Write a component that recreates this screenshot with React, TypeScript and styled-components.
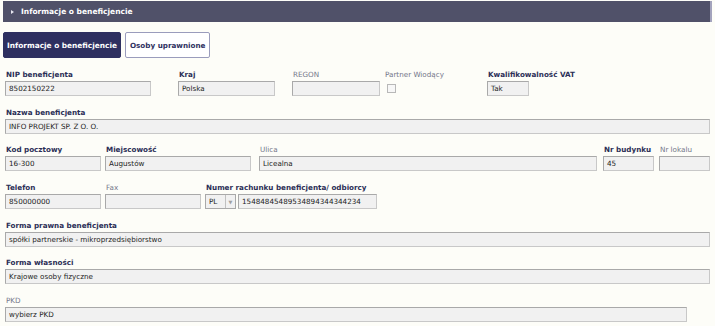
import React from "react";
import styled, { createGlobalStyle } from "styled-components";

const Global = createGlobalStyle`
  html, body { margin: 0; padding: 0; background: #fdfdf8; }
  body { font-family: "DejaVu Sans", Verdana, sans-serif; }
`;

const Page = styled.div`
  width: 715px;
  height: 326px;
  padding: 1px 3px 0 3px;
  box-sizing: border-box;
  overflow: hidden;
`;

const Header = styled.div`
  height: 21px;
  background: #505169;
  border-right: 2px solid #a3a3bd;
  display: flex;
  align-items: center;
  padding-left: 8px;
  gap: 7px;
  color: #fff;
  font-weight: bold;
  font-size: 7.5px;
  width: 709px;
  box-sizing: border-box;
`;

const Caret = styled.span`
  width: 0;
  height: 0;
  border-top: 2.5px solid transparent;
  border-bottom: 2.5px solid transparent;
  border-left: 3px solid #e8e8f0;
`;

const Tabs = styled.div`
  display: flex;
  gap: 4px;
  margin-top: 10px;
`;

const Tab = styled.div<{ $active?: boolean }>`
  height: 26px;
  display: flex;
  align-items: center;
  padding: 0 ${(p) => (p.$active ? "3px" : "4px")};
  border-radius: 2px;
  font-weight: bold;
  font-size: ${(p) => (p.$active ? "7.4px" : "7.2px")};
  box-sizing: border-box;
  background: ${(p) => (p.$active ? "#2e3060" : "#ffffff")};
  color: ${(p) => (p.$active ? "#ffffff" : "#2e3060")};
  border: 1px solid ${(p) => (p.$active ? "#2e3060" : "#9a9cbc")};
`;

const Form = styled.div`
  display: flex;
  flex-direction: column;
  gap: 11.7px;
  margin-top: 12px;
  padding-left: 2px;
`;

const Row = styled.div`
  display: flex;
  align-items: flex-start;
`;

const Field = styled.div<{ $w: number }>`
  width: ${(p) => p.$w}px;
  flex: none;
  display: flex;
  flex-direction: column;
`;

const Label = styled.div<{ $light?: boolean }>`
  height: 11px;
  line-height: 9px;
  font-size: 7.2px;
  padding-left: 1px;
  white-space: nowrap;
  font-weight: ${(p) => (p.$light ? "normal" : "bold")};
  color: ${(p) => (p.$light ? "#737689" : "#2b2e56")};
`;

const Input = styled.div<{ $w: number }>`
  width: ${(p) => p.$w}px;
  height: 15px;
  box-sizing: border-box;
  background: #f1f1f1;
  border: 1px solid #a9a9a9;
  border-right-color: #c8c8c8;
  border-bottom-color: #c8c8c8;
  font-size: 7.2px;
  color: #1c1c1c;
  line-height: 13px;
  padding-left: 3px;
  white-space: nowrap;
  overflow: hidden;
`;

const Check = styled.div`
  width: 9px;
  height: 9px;
  margin: 3px 0 0 3px;
  box-sizing: border-box;
  border: 1px solid #b8b8b8;
  background: #f7f7f7;
`;

const Inline = styled.div`
  display: flex;
  gap: 2px;
`;

const Select = styled.div`
  width: 31px;
  height: 15px;
  box-sizing: border-box;
  border: 1px solid #a9a9a9;
  background: #f1f1f1;
  display: flex;
  font-size: 7.2px;
  color: #1c1c1c;
`;

const SelectText = styled.div`
  width: 16px;
  line-height: 13px;
  padding-left: 3px;
  border-right: 1px solid #c0c0c0;
`;

const SelectArrow = styled.div`
  flex: 1;
  display: flex;
  align-items: center;
  justify-content: center;
  color: #a0a0a0;
  font-size: 5px;
`;

export default function App() {
  return (
    <>
      <Global />
      <Page>
        <Header>
          <Caret />
          <span>Informacje o beneficjencie</span>
        </Header>
        <Tabs>
          <Tab $active>Informacje o beneficjencie</Tab>
          <Tab>Osoby uprawnione</Tab>
        </Tabs>
        <Form>
          <Row>
            <Field $w={173}>
              <Label>NIP beneficjenta</Label>
              <Input $w={146}>8502150222</Input>
            </Field>
            <Field $w={114}>
              <Label>Kraj</Label>
              <Input $w={97}>Polska</Input>
            </Field>
            <Field $w={92}>
              <Label $light>REGON</Label>
              <Input $w={88} />
            </Field>
            <Field $w={103}>
              <Label $light>Partner Wiodący</Label>
              <Check />
            </Field>
            <Field $w={120}>
              <Label>Kwalifikowalność VAT</Label>
              <Input $w={42}>Tak</Input>
            </Field>
          </Row>
          <Row>
            <Field $w={705}>
              <Label>Nazwa beneficjenta</Label>
              <Input $w={705}>INFO PROJEKT SP. Z O. O.</Input>
            </Field>
          </Row>
          <Row>
            <Field $w={100}>
              <Label>Kod pocztowy</Label>
              <Input $w={96}>16-300</Input>
            </Field>
            <Field $w={154}>
              <Label>Miejscowość</Label>
              <Input $w={146}>Augustów</Input>
            </Field>
            <Field $w={344}>
              <Label $light>Ulica</Label>
              <Input $w={338}>Licealna</Input>
            </Field>
            <Field $w={56}>
              <Label>Nr budynku</Label>
              <Input $w={51}>45</Input>
            </Field>
            <Field $w={51}>
              <Label $light>Nr lokalu</Label>
              <Input $w={51} />
            </Field>
          </Row>
          <Row>
            <Field $w={100}>
              <Label>Telefon</Label>
              <Input $w={96}>850000000</Input>
            </Field>
            <Field $w={100}>
              <Label $light>Fax</Label>
              <Input $w={96} />
            </Field>
            <Field $w={200}>
              <Label>Numer rachunku beneficjenta/ odbiorcy</Label>
              <Inline>
                <Select>
                  <SelectText>PL</SelectText>
                  <SelectArrow>▼</SelectArrow>
                </Select>
                <Input $w={139}>15484845489534894344344234</Input>
              </Inline>
            </Field>
          </Row>
          <Row>
            <Field $w={705}>
              <Label>Forma prawna beneficjenta</Label>
              <Input $w={705}>spółki partnerskie - mikroprzedsiębiorstwo</Input>
            </Field>
          </Row>
          <Row>
            <Field $w={705}>
              <Label>Forma własności</Label>
              <Input $w={705}>Krajowe osoby fizyczne</Input>
            </Field>
          </Row>
          <Row>
            <Field $w={682}>
              <Label $light>PKD</Label>
              <Input $w={682}>wybierz PKD</Input>
            </Field>
          </Row>
        </Form>
      </Page>
    </>
  );
}
